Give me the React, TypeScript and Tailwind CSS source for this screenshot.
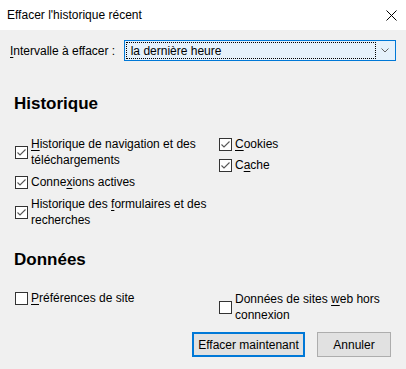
import type { ReactNode } from 'react'

function Check({ checked }: { checked?: boolean }) {
  return (
    <span className="w-[13px] h-[13px] shrink-0 border border-[#333333] bg-white flex items-center justify-center">
      {checked && (
        <svg width="11" height="11" viewBox="0 0 11 11">
          <path d="M1.5 5.5 L4 8 L9.5 2.5" fill="none" stroke="#555555" strokeWidth="1.1" />
        </svg>
      )}
    </span>
  )
}

function Option({ checked, children, className = '' }: { checked?: boolean; children: ReactNode; className?: string }) {
  return (
    <label className={`flex items-center gap-[3px] ${className}`}>
      <Check checked={checked} />
      <span className="leading-[16px]">{children}</span>
    </label>
  )
}

export default function App() {
  return (
    <div
      className="w-[406px] h-[369px] bg-[#f0f0f0] text-black text-[12px] overflow-hidden"
      style={{ fontFamily: '"Liberation Sans", Arial, sans-serif' }}
    >
      {/* Title bar */}
      <div className="h-[30px] bg-white flex items-center justify-between pl-[7px] pr-[9px]">
        <span>Effacer l'historique récent</span>
        <svg width="11" height="11" viewBox="0 0 11 11">
          <path d="M0.5 0.5 L10.5 10.5 M10.5 0.5 L0.5 10.5" stroke="#000" strokeWidth="1" />
        </svg>
      </div>

      <div className="px-[10px]">
        {/* Range */}
        <div className="flex items-center mt-[10px]">
          <span className="w-[114px]">
            <span className="underline underline-offset-2">I</span>ntervalle à effacer :
          </span>
          <div className="w-[273px] h-[21px] border border-[#0078d7] bg-[#e5f1fb] flex items-center p-[1px]">
            <div className="flex-1 h-full border border-dotted border-black flex items-center pl-[4px]">
              la dernière heure
            </div>
            <div className="w-[18px] flex items-center justify-center">
              <svg width="8" height="5" viewBox="0 0 8 5">
                <path d="M0.5 0.5 L4 4 L7.5 0.5" fill="none" stroke="#606060" strokeWidth="1" />
              </svg>
            </div>
          </div>
        </div>

        {/* Historique */}
        <h2 className="font-bold text-[17px] leading-[20px] mt-[33px] ml-[4px]">Historique</h2>
        <div className="flex mt-[22px] ml-[5px]">
          <div className="w-[204px] flex flex-col">
            <Option checked>
              <span className="underline underline-offset-2">H</span>istorique de navigation et des<br />téléchargements
            </Option>
            <Option checked className="mt-[6px]">
              Conne<span className="underline underline-offset-2">x</span>ions actives
            </Option>
            <Option checked className="mt-[6px]">
              Historique des <span className="underline underline-offset-2">f</span>ormulaires et des<br />recherches
            </Option>
          </div>
          <div className="flex flex-col">
            <Option checked>
              <span className="underline underline-offset-2">C</span>ookies
            </Option>
            <Option checked className="mt-[5px]">
              C<span className="underline underline-offset-2">a</span>che
            </Option>
          </div>
        </div>

        {/* Données */}
        <h2 className="font-bold text-[17px] leading-[20px] mt-[22px] ml-[4px]">Données</h2>
        <div className="flex items-start mt-[20px] ml-[5px]">
          <div className="w-[204px]">
            <Option>
              <span className="underline underline-offset-2">P</span>références de site
            </Option>
          </div>
          <div className="mt-[1px]">
            <Option>
              Données de sites <span className="underline underline-offset-2">w</span>eb hors<br />connexion
            </Option>
          </div>
        </div>

        {/* Buttons */}
        <div className="flex justify-end gap-[12px] mt-[9px] pr-[5px]">
          <button className="w-[113px] h-[25px] border-2 border-[#0078d7] bg-[#e1e1e1]">Effacer maintenant</button>
          <button className="w-[74px] h-[25px] border border-[#adadad] bg-[#e1e1e1]">Annuler</button>
        </div>
      </div>
    </div>
  )
}
